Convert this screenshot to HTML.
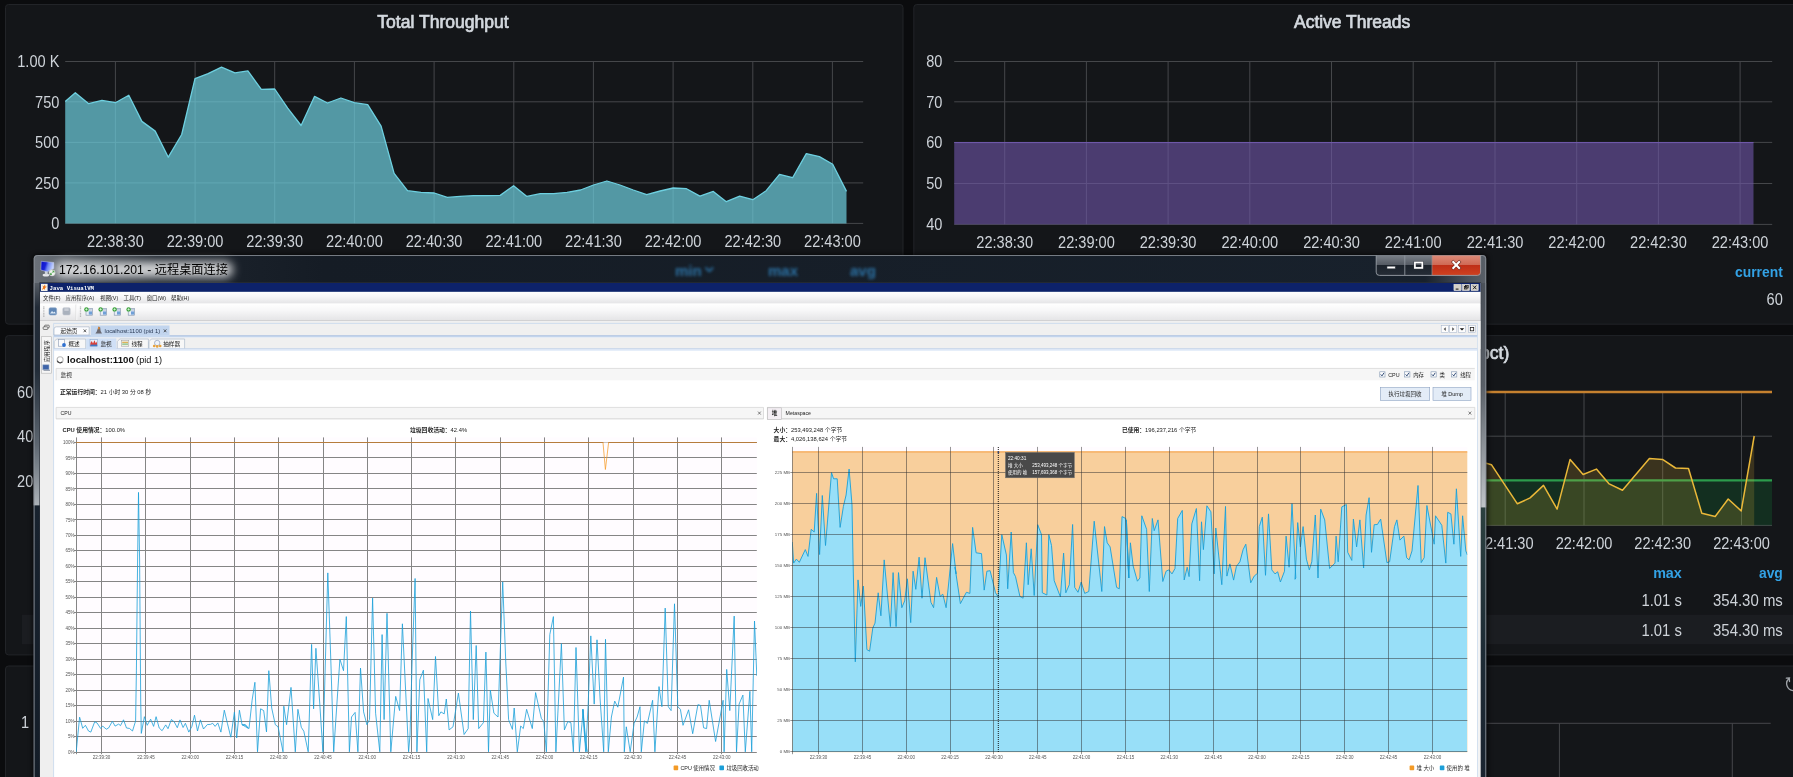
<!DOCTYPE html>
<html lang="zh-CN"><head><meta charset="utf-8"><title>Dashboard</title>
<style>html,body{margin:0;padding:0}body{width:1793px;height:777px;overflow:hidden;background:#0b0c0e;position:relative;font-family:"Liberation Sans", "Noto Sans CJK SC", sans-serif}

#win{position:absolute;left:0;top:0}

</style></head><body>
<svg id="dash" width="1793" height="777" viewBox="0 0 1793 777" style="position:absolute;left:0;top:0;will-change:transform" font-family='&quot;Liberation Sans&quot;, &quot;Noto Sans CJK SC&quot;, sans-serif'>
<rect x="5.5" y="4.5" width="897.5" height="319.7" rx="3" fill="#141619" stroke="#222428" stroke-width="1"/>
<rect x="913.8" y="4.5" width="897.5" height="319.7" rx="3" fill="#141619" stroke="#222428" stroke-width="1"/>
<rect x="5.5" y="335.6" width="897.5" height="319.3" rx="3" fill="#141619" stroke="#222428" stroke-width="1"/>
<rect x="913.8" y="335.6" width="897.5" height="319.3" rx="3" fill="#141619" stroke="#222428" stroke-width="1"/>
<rect x="5.5" y="666.0" width="897.5" height="199.0" rx="3" fill="#141619" stroke="#222428" stroke-width="1"/>
<rect x="913.8" y="666.0" width="897.5" height="199.0" rx="3" fill="#141619" stroke="#222428" stroke-width="1"/>
<text x="377.3" y="28.4" font-size="17.5" fill="#d3d8de" stroke="#d3d8de" stroke-width="0.7" textLength="131.4" lengthAdjust="spacingAndGlyphs">Total Throughput</text>
<line x1="65.2" y1="61.5" x2="863.2" y2="61.5" stroke="#45474a" stroke-width="1"/>
<line x1="65.2" y1="101.8" x2="863.2" y2="101.8" stroke="#45474a" stroke-width="1"/>
<line x1="65.2" y1="142.4" x2="863.2" y2="142.4" stroke="#45474a" stroke-width="1"/>
<line x1="65.2" y1="182.9" x2="863.2" y2="182.9" stroke="#45474a" stroke-width="1"/>
<line x1="65.2" y1="223.4" x2="863.2" y2="223.4" stroke="#45474a" stroke-width="1"/>
<line x1="115.4" y1="61" x2="115.4" y2="223.8" stroke="#45474a" stroke-width="1"/>
<line x1="195.1" y1="61" x2="195.1" y2="223.8" stroke="#45474a" stroke-width="1"/>
<line x1="274.7" y1="61" x2="274.7" y2="223.8" stroke="#45474a" stroke-width="1"/>
<line x1="354.4" y1="61" x2="354.4" y2="223.8" stroke="#45474a" stroke-width="1"/>
<line x1="434.1" y1="61" x2="434.1" y2="223.8" stroke="#45474a" stroke-width="1"/>
<line x1="513.8" y1="61" x2="513.8" y2="223.8" stroke="#45474a" stroke-width="1"/>
<line x1="593.4" y1="61" x2="593.4" y2="223.8" stroke="#45474a" stroke-width="1"/>
<line x1="673.1" y1="61" x2="673.1" y2="223.8" stroke="#45474a" stroke-width="1"/>
<line x1="752.8" y1="61" x2="752.8" y2="223.8" stroke="#45474a" stroke-width="1"/>
<line x1="832.4" y1="61" x2="832.4" y2="223.8" stroke="#45474a" stroke-width="1"/>
<polygon points="65.2,223.4 65.2,101.4 75.3,92.7 88.7,103.7 102.0,100.4 115.4,102.7 128.8,95.3 141.9,121.4 155.2,131.1 168.3,157.2 181.7,134.5 195.0,78.6 208.1,73.6 221.5,67.2 234.9,72.9 247.9,70.9 261.3,89.3 274.7,89.0 287.7,108.1 301.1,125.5 314.5,96.4 327.5,103.0 340.9,98.0 354.3,102.7 367.7,104.7 381.1,126.1 394.1,173.3 407.5,190.7 420.9,192.4 434.3,193.0 447.3,197.4 460.0,196.4 473.4,195.7 486.8,195.7 500.2,195.4 513.6,185.7 526.9,196.4 540.3,193.7 553.7,193.7 567.1,192.4 580.5,190.0 593.5,185.0 606.9,181.0 620.0,185.0 633.3,190.0 646.7,194.7 660.1,191.0 673.2,188.0 686.5,188.7 699.9,196.1 713.3,191.4 726.3,201.7 739.7,196.1 752.8,199.7 766.2,190.7 779.5,174.3 792.6,177.7 806.3,153.6 819.4,156.6 832.7,164.3 846.5,191.4 846.5,223.4" fill="#6ed0e0" fill-opacity="0.7"/>
<polyline points="65.2,101.4 75.3,92.7 88.7,103.7 102.0,100.4 115.4,102.7 128.8,95.3 141.9,121.4 155.2,131.1 168.3,157.2 181.7,134.5 195.0,78.6 208.1,73.6 221.5,67.2 234.9,72.9 247.9,70.9 261.3,89.3 274.7,89.0 287.7,108.1 301.1,125.5 314.5,96.4 327.5,103.0 340.9,98.0 354.3,102.7 367.7,104.7 381.1,126.1 394.1,173.3 407.5,190.7 420.9,192.4 434.3,193.0 447.3,197.4 460.0,196.4 473.4,195.7 486.8,195.7 500.2,195.4 513.6,185.7 526.9,196.4 540.3,193.7 553.7,193.7 567.1,192.4 580.5,190.0 593.5,185.0 606.9,181.0 620.0,185.0 633.3,190.0 646.7,194.7 660.1,191.0 673.2,188.0 686.5,188.7 699.9,196.1 713.3,191.4 726.3,201.7 739.7,196.1 752.8,199.7 766.2,190.7 779.5,174.3 792.6,177.7 806.3,153.6 819.4,156.6 832.7,164.3 846.5,191.4" fill="none" stroke="#6ed0e0" stroke-width="1.3" stroke-linejoin="round"/>
<text transform="translate(59.4 67.4) scale(0.935 1)" text-anchor="end" font-size="15.6" fill="#ced3d9">1.00 K</text>
<text transform="translate(59.4 107.7) scale(0.935 1)" text-anchor="end" font-size="15.6" fill="#ced3d9">750</text>
<text transform="translate(59.4 148.3) scale(0.935 1)" text-anchor="end" font-size="15.6" fill="#ced3d9">500</text>
<text transform="translate(59.4 188.8) scale(0.935 1)" text-anchor="end" font-size="15.6" fill="#ced3d9">250</text>
<text transform="translate(59.4 229.3) scale(0.935 1)" text-anchor="end" font-size="15.6" fill="#ced3d9">0</text>
<text transform="translate(115.4 247.1) scale(0.935 1)" text-anchor="middle" font-size="15.6" fill="#ced3d9">22:38:30</text>
<text transform="translate(195.1 247.1) scale(0.935 1)" text-anchor="middle" font-size="15.6" fill="#ced3d9">22:39:00</text>
<text transform="translate(274.7 247.1) scale(0.935 1)" text-anchor="middle" font-size="15.6" fill="#ced3d9">22:39:30</text>
<text transform="translate(354.4 247.1) scale(0.935 1)" text-anchor="middle" font-size="15.6" fill="#ced3d9">22:40:00</text>
<text transform="translate(434.1 247.1) scale(0.935 1)" text-anchor="middle" font-size="15.6" fill="#ced3d9">22:40:30</text>
<text transform="translate(513.8 247.1) scale(0.935 1)" text-anchor="middle" font-size="15.6" fill="#ced3d9">22:41:00</text>
<text transform="translate(593.4 247.1) scale(0.935 1)" text-anchor="middle" font-size="15.6" fill="#ced3d9">22:41:30</text>
<text transform="translate(673.1 247.1) scale(0.935 1)" text-anchor="middle" font-size="15.6" fill="#ced3d9">22:42:00</text>
<text transform="translate(752.8 247.1) scale(0.935 1)" text-anchor="middle" font-size="15.6" fill="#ced3d9">22:42:30</text>
<text transform="translate(832.4 247.1) scale(0.935 1)" text-anchor="middle" font-size="15.6" fill="#ced3d9">22:43:00</text>
<text transform="translate(675.0 275.5) scale(0.935 1)" text-anchor="start" font-size="15.0" fill="#33a2e5" font-weight="bold">min</text>
<text transform="translate(768.0 275.5) scale(0.935 1)" text-anchor="start" font-size="15.0" fill="#33a2e5" font-weight="bold">max</text>
<text transform="translate(850.0 275.5) scale(0.935 1)" text-anchor="start" font-size="15.0" fill="#33a2e5" font-weight="bold">avg</text>
<text x="1294" y="28.4" font-size="17.5" fill="#d3d8de" stroke="#d3d8de" stroke-width="0.7" textLength="116.2" lengthAdjust="spacingAndGlyphs">Active Threads</text>
<line x1="954.2" y1="61.5" x2="1772.2" y2="61.5" stroke="#45474a" stroke-width="1"/>
<line x1="954.2" y1="101.8" x2="1772.2" y2="101.8" stroke="#45474a" stroke-width="1"/>
<line x1="954.2" y1="142.4" x2="1772.2" y2="142.4" stroke="#45474a" stroke-width="1"/>
<line x1="954.2" y1="183.5" x2="1772.2" y2="183.5" stroke="#45474a" stroke-width="1"/>
<line x1="954.2" y1="224.4" x2="1772.2" y2="224.4" stroke="#45474a" stroke-width="1"/>
<line x1="1004.7" y1="61" x2="1004.7" y2="224.8" stroke="#45474a" stroke-width="1"/>
<line x1="1086.4" y1="61" x2="1086.4" y2="224.8" stroke="#45474a" stroke-width="1"/>
<line x1="1168.1" y1="61" x2="1168.1" y2="224.8" stroke="#45474a" stroke-width="1"/>
<line x1="1249.8" y1="61" x2="1249.8" y2="224.8" stroke="#45474a" stroke-width="1"/>
<line x1="1331.5" y1="61" x2="1331.5" y2="224.8" stroke="#45474a" stroke-width="1"/>
<line x1="1413.2" y1="61" x2="1413.2" y2="224.8" stroke="#45474a" stroke-width="1"/>
<line x1="1495.0" y1="61" x2="1495.0" y2="224.8" stroke="#45474a" stroke-width="1"/>
<line x1="1576.7" y1="61" x2="1576.7" y2="224.8" stroke="#45474a" stroke-width="1"/>
<line x1="1658.4" y1="61" x2="1658.4" y2="224.8" stroke="#45474a" stroke-width="1"/>
<line x1="1740.1" y1="61" x2="1740.1" y2="224.8" stroke="#45474a" stroke-width="1"/>
<rect x="954.2" y="142.4" width="799.3" height="82" fill="#7057aa" fill-opacity="0.6"/>
<line x1="954.2" y1="142.6" x2="1753.5" y2="142.6" stroke="#7a5fc0" stroke-width="1" stroke-opacity="0.8"/>
<text transform="translate(942.4 67.4) scale(0.935 1)" text-anchor="end" font-size="15.6" fill="#ced3d9">80</text>
<text transform="translate(942.4 107.7) scale(0.935 1)" text-anchor="end" font-size="15.6" fill="#ced3d9">70</text>
<text transform="translate(942.4 148.3) scale(0.935 1)" text-anchor="end" font-size="15.6" fill="#ced3d9">60</text>
<text transform="translate(942.4 189.4) scale(0.935 1)" text-anchor="end" font-size="15.6" fill="#ced3d9">50</text>
<text transform="translate(942.4 230.3) scale(0.935 1)" text-anchor="end" font-size="15.6" fill="#ced3d9">40</text>
<text transform="translate(1004.7 247.7) scale(0.935 1)" text-anchor="middle" font-size="15.6" fill="#ced3d9">22:38:30</text>
<text transform="translate(1086.4 247.7) scale(0.935 1)" text-anchor="middle" font-size="15.6" fill="#ced3d9">22:39:00</text>
<text transform="translate(1168.1 247.7) scale(0.935 1)" text-anchor="middle" font-size="15.6" fill="#ced3d9">22:39:30</text>
<text transform="translate(1249.8 247.7) scale(0.935 1)" text-anchor="middle" font-size="15.6" fill="#ced3d9">22:40:00</text>
<text transform="translate(1331.5 247.7) scale(0.935 1)" text-anchor="middle" font-size="15.6" fill="#ced3d9">22:40:30</text>
<text transform="translate(1413.2 247.7) scale(0.935 1)" text-anchor="middle" font-size="15.6" fill="#ced3d9">22:41:00</text>
<text transform="translate(1495.0 247.7) scale(0.935 1)" text-anchor="middle" font-size="15.6" fill="#ced3d9">22:41:30</text>
<text transform="translate(1576.7 247.7) scale(0.935 1)" text-anchor="middle" font-size="15.6" fill="#ced3d9">22:42:00</text>
<text transform="translate(1658.4 247.7) scale(0.935 1)" text-anchor="middle" font-size="15.6" fill="#ced3d9">22:42:30</text>
<text transform="translate(1740.1 247.7) scale(0.935 1)" text-anchor="middle" font-size="15.6" fill="#ced3d9">22:43:00</text>
<text transform="translate(1782.8 277.2) scale(0.900 1)" text-anchor="end" font-size="15.4" fill="#33a2e5" font-weight="bold">current</text>
<text transform="translate(1782.8 304.9) scale(0.935 1)" text-anchor="end" font-size="15.6" fill="#ced3d9">60</text>
<text transform="translate(33.3 398.2) scale(0.935 1)" text-anchor="end" font-size="15.6" fill="#ced3d9">60</text>
<text transform="translate(33.3 442.2) scale(0.935 1)" text-anchor="end" font-size="15.6" fill="#ced3d9">40</text>
<text transform="translate(33.3 486.6) scale(0.935 1)" text-anchor="end" font-size="15.6" fill="#ced3d9">20</text>
<rect x="21.9" y="614.8" width="870" height="29.4" fill="#1b1d21"/>
<text x="1509.3" y="359" text-anchor="end" font-size="17.5" fill="#d3d8de" stroke="#d3d8de" stroke-width="0.7">Response Times Percentiles (over 90 pct)</text>
<line x1="954.2" y1="436.2" x2="1772.0" y2="436.2" stroke="#45474a" stroke-width="1"/>
<line x1="954.2" y1="480.4" x2="1772.0" y2="480.4" stroke="#45474a" stroke-width="1"/>
<line x1="954.2" y1="525.4" x2="1772.0" y2="525.4" stroke="#45474a" stroke-width="1"/>
<line x1="1032.6" y1="392" x2="1032.6" y2="525.8" stroke="#45474a" stroke-width="1"/>
<line x1="1111.4" y1="392" x2="1111.4" y2="525.8" stroke="#45474a" stroke-width="1"/>
<line x1="1190.1" y1="392" x2="1190.1" y2="525.8" stroke="#45474a" stroke-width="1"/>
<line x1="1268.9" y1="392" x2="1268.9" y2="525.8" stroke="#45474a" stroke-width="1"/>
<line x1="1347.7" y1="392" x2="1347.7" y2="525.8" stroke="#45474a" stroke-width="1"/>
<line x1="1426.4" y1="392" x2="1426.4" y2="525.8" stroke="#45474a" stroke-width="1"/>
<line x1="1505.2" y1="392" x2="1505.2" y2="525.8" stroke="#45474a" stroke-width="1"/>
<line x1="1584.0" y1="392" x2="1584.0" y2="525.8" stroke="#45474a" stroke-width="1"/>
<line x1="1662.7" y1="392" x2="1662.7" y2="525.8" stroke="#45474a" stroke-width="1"/>
<line x1="1741.5" y1="392" x2="1741.5" y2="525.8" stroke="#45474a" stroke-width="1"/>
<rect x="954.2" y="480.4" width="817.8" height="45" fill="#10a345" fill-opacity="0.18"/>
<line x1="954.2" y1="480.4" x2="1772.0" y2="480.4" stroke="#2c9c4c" stroke-width="2.2"/>
<polygon points="1400.0,525.4 1400.0,470.0 1440.0,455.0 1470.0,470.0 1486.3,463.2 1491.4,464.7 1517.4,503.8 1530.1,497.9 1543.5,485.4 1557.1,509.1 1570.1,459.4 1583.1,474.5 1596.4,469.1 1609.2,483.9 1622.5,490.2 1649.4,458.5 1662.5,459.4 1675.5,468.0 1688.5,468.5 1701.8,513.2 1715.2,516.5 1728.2,499.0 1741.2,510.9 1754.2,436.0 1754.2,525.4" fill="#eab839" fill-opacity="0.18"/>
<polyline points="1400.0,470.0 1440.0,455.0 1470.0,470.0 1486.3,463.2 1491.4,464.7 1517.4,503.8 1530.1,497.9 1543.5,485.4 1557.1,509.1 1570.1,459.4 1583.1,474.5 1596.4,469.1 1609.2,483.9 1622.5,490.2 1649.4,458.5 1662.5,459.4 1675.5,468.0 1688.5,468.5 1701.8,513.2 1715.2,516.5 1728.2,499.0 1741.2,510.9 1754.2,436.0" fill="none" stroke="#eab839" stroke-width="1.5" stroke-linejoin="round"/>
<line x1="954.2" y1="392" x2="1772.0" y2="392" stroke="#c5812f" stroke-width="2.5"/>
<text transform="translate(1426.4 548.9) scale(0.935 1)" text-anchor="middle" font-size="15.6" fill="#ced3d9">22:41:00</text>
<text transform="translate(1505.2 548.9) scale(0.935 1)" text-anchor="middle" font-size="15.6" fill="#ced3d9">22:41:30</text>
<text transform="translate(1584.0 548.9) scale(0.935 1)" text-anchor="middle" font-size="15.6" fill="#ced3d9">22:42:00</text>
<text transform="translate(1662.7 548.9) scale(0.935 1)" text-anchor="middle" font-size="15.6" fill="#ced3d9">22:42:30</text>
<text transform="translate(1741.5 548.9) scale(0.935 1)" text-anchor="middle" font-size="15.6" fill="#ced3d9">22:43:00</text>
<text transform="translate(1681.8 578.2) scale(0.930 1)" text-anchor="end" font-size="15.4" fill="#33a2e5" font-weight="bold">max</text>
<text transform="translate(1782.8 578.2) scale(0.900 1)" text-anchor="end" font-size="15.4" fill="#33a2e5" font-weight="bold">avg</text>
<rect x="930" y="614.8" width="870" height="29.4" fill="#1b1d21"/>
<text transform="translate(1681.8 605.8) scale(0.950 1)" text-anchor="end" font-size="15.6" fill="#ced3d9">1.01 s</text>
<text transform="translate(1782.8 605.8) scale(0.958 1)" text-anchor="end" font-size="15.6" fill="#ced3d9">354.30 ms</text>
<text transform="translate(1681.8 635.8) scale(0.950 1)" text-anchor="end" font-size="15.6" fill="#ced3d9">1.01 s</text>
<text transform="translate(1782.8 635.8) scale(0.958 1)" text-anchor="end" font-size="15.6" fill="#ced3d9">354.30 ms</text>
<text transform="translate(29.0 727.6) scale(0.935 1)" text-anchor="end" font-size="15.6" fill="#ced3d9">1</text>
<line x1="954" y1="723.3" x2="1770.7" y2="723.3" stroke="#45474a" stroke-width="1"/>
<line x1="1559.4" y1="723.3" x2="1559.4" y2="777" stroke="#45474a" stroke-width="1"/>
<line x1="1732.3" y1="723.3" x2="1732.3" y2="777" stroke="#45474a" stroke-width="1"/>
<path d="M1793.5 690.6 a7 7 0 0 1 -4.5 -12.2 M1786.3 678.2 l3.4 -0.4 M1789.3 678.2 l0.2 3.3" fill="none" stroke="#9fa3a8" stroke-width="1.3" stroke-linecap="round"/>
</svg>
<svg id="win" width="1793" height="777" viewBox="0 0 1793 777" style="position:absolute;left:0;top:0;will-change:transform" font-family='&quot;Liberation Sans&quot;, &quot;Noto Sans CJK SC&quot;, sans-serif'>
<defs>
<filter id="soft" filterUnits="userSpaceOnUse" x="40" y="283" width="1441" height="500"><feGaussianBlur stdDeviation="0.38"/></filter>
<filter id="b1" x="-20%" y="-50%" width="140%" height="200%"><feGaussianBlur stdDeviation="1.6"/></filter>
<filter id="glow" x="-10%" y="-60%" width="120%" height="220%"><feGaussianBlur stdDeviation="4.6"/></filter>
<filter id="shadow" x="-2%" y="-2%" width="104%" height="104%"><feGaussianBlur stdDeviation="2"/></filter>
<linearGradient id="gLeft" x1="0" y1="255" x2="0" y2="777" gradientUnits="userSpaceOnUse">
 <stop offset="0.05" stop-color="#5a6068"/><stop offset="0.1" stop-color="#222b37"/><stop offset="0.22" stop-color="#222c38"/><stop offset="0.36" stop-color="#5c656f"/>
 <stop offset="0.478" stop-color="#aab0b6"/><stop offset="0.481" stop-color="#18222e"/><stop offset="1" stop-color="#141d28"/>
</linearGradient>
<linearGradient id="gRight" x1="0" y1="255" x2="0" y2="777" gradientUnits="userSpaceOnUse">
 <stop offset="0" stop-color="#5a6068"/><stop offset="0.06" stop-color="#4b5159"/><stop offset="0.25" stop-color="#5a6068"/>
 <stop offset="0.482" stop-color="#bfc4c7"/><stop offset="0.485" stop-color="#2c4140"/><stop offset="0.75" stop-color="#1e2c36"/><stop offset="1" stop-color="#1a2430"/>
</linearGradient>
<linearGradient id="gTitle" x1="0" y1="0" x2="1" y2="0">
 <stop offset="0" stop-color="#6c727a"/><stop offset="0.012" stop-color="#636971"/><stop offset="0.04" stop-color="#3d444c"/><stop offset="0.085" stop-color="#1d242d"/><stop offset="0.2" stop-color="#151c25"/><stop offset="0.958" stop-color="#18212c"/><stop offset="0.988" stop-color="#4b525b"/><stop offset="1" stop-color="#5a6068"/>
</linearGradient>
<linearGradient id="gBtn" x1="0" y1="0" x2="0" y2="1">
 <stop offset="0" stop-color="#7a8088"/><stop offset="0.46" stop-color="#555b64"/><stop offset="0.5" stop-color="#1c232c"/><stop offset="1" stop-color="#252c36"/>
</linearGradient>
<linearGradient id="gClose" x1="0" y1="0" x2="0" y2="1">
 <stop offset="0" stop-color="#dd8a78"/><stop offset="0.46" stop-color="#cf6a55"/><stop offset="0.5" stop-color="#bf2f18"/><stop offset="1" stop-color="#cf4120"/>
</linearGradient>
<linearGradient id="gMenu" x1="0" y1="0" x2="0" y2="1">
 <stop offset="0" stop-color="#ffffff"/><stop offset="0.4" stop-color="#f7f7f8"/><stop offset="1" stop-color="#e4e4e6"/>
</linearGradient>
<linearGradient id="gMon" x1="0" y1="0" x2="1" y2="0.25">
 <stop offset="0" stop-color="#0a0fc4"/><stop offset="0.42" stop-color="#1a22d8"/><stop offset="0.62" stop-color="#6f86f2"/><stop offset="1" stop-color="#c4d2ff"/>
</linearGradient>
<clipPath id="cpuclip"><rect x="76" y="441" width="681" height="311.6"/></clipPath>
<clipPath id="heapclip"><rect x="792.3" y="445" width="675" height="307"/></clipPath>
</defs>
<rect x="32" y="254" width="1456.5" height="540" rx="5" fill="#000" opacity="0.55" filter="url(#shadow)"/>
<path d="M33.7 800 V258.6 a3.6 3.6 0 0 1 3.6 -3.6 H1482.6 a3.6 3.6 0 0 1 3.6 3.6 V800 Z" fill="url(#gTitle)"/>
<rect x="33.7" y="283" width="6.4" height="520" fill="url(#gLeft)"/>
<rect x="1480.3" y="283" width="5.9" height="520" fill="url(#gRight)"/>
<path d="M34.2 800 V258.7 a3.2 3.2 0 0 1 3.2 -3.2 H1482.5 a3.2 3.2 0 0 1 3.2 3.2 V800" fill="none" stroke="#8d939b" stroke-opacity="0.8" stroke-width="1"/>
<path d="M39.7 800 V282.6 H1480.7 V800" fill="none" stroke="#2a3038" stroke-opacity="0.9" stroke-width="0.8"/>
<g font-size="15" font-weight="bold" fill="#2f7fb8" filter="url(#b1)" opacity="0.85">
<text x="675" y="275.5">min</text><path d="M705.5 267.5 l3.8 3.8 l3.8 -3.8" fill="none" stroke="#2f7fb8" stroke-width="1.8"/>
<text x="768" y="275.5">max</text><text x="850" y="275.5">avg</text></g>
<rect x="55" y="261.5" width="178" height="16" rx="8" fill="#fff" opacity="0.8" filter="url(#glow)"/>
<text x="59" y="273.6" font-size="12.4" fill="#000" textLength="169" lengthAdjust="spacingAndGlyphs">172.16.101.201 - 远程桌面连接</text>
<g>
<ellipse cx="45.9" cy="275" rx="3.3" ry="1.6" fill="#e6e7eb"/>
<path d="M44.6 270.6 l3.2 0.8 l-0.3 3.2 l-2.4 -0.2 Z" fill="#cfd3da"/>
<path d="M41.2 261.3 L53.8 262.5 L53.8 268.6 L47.5 271.7 L40.8 270 Z" fill="url(#gMon)" stroke="#c9d3ee" stroke-width="0.5"/>
<circle cx="52.1" cy="272.8" r="3.1" fill="#f1f3f0" stroke="#c9ccc8" stroke-width="0.5"/>
<path d="M50.4 274.4 l1.4 -1.4 M53.8 271.2 l-1.4 1.4 M50.3 272.9 v1.6 h1.6 M53.9 272.7 v-1.6 h-1.6" stroke="#3a9a3a" stroke-width="0.8" fill="none"/>
</g>
<path d="M1376.2 255.5 H1432 V275.4 H1379.4 a3.2 3.2 0 0 1 -3.2 -3.2 Z" fill="url(#gBtn)"/>
<path d="M1432 255.5 H1480.6 V272.2 a3.2 3.2 0 0 1 -3.2 3.2 H1432 Z" fill="url(#gClose)"/>
<path d="M1376.2 255.5 V272.2 a3.2 3.2 0 0 0 3.2 3.2 H1477.4 a3.2 3.2 0 0 0 3.2 -3.2 V255.5" fill="none" stroke="#9aa0a8" stroke-width="0.9"/>
<line x1="1404.8" y1="255.5" x2="1404.8" y2="275" stroke="#8f959d" stroke-width="0.9"/>
<line x1="1432" y1="255.5" x2="1432" y2="275" stroke="#9a8f8f" stroke-width="0.7"/>
<rect x="1387" y="266.2" width="8.2" height="2.6" fill="#fff" stroke="#3a3f47" stroke-width="0.5"/>
<rect x="1414.9" y="262.5" width="7.4" height="5.4" fill="none" stroke="#3a3f47" stroke-width="2.6"/>
<rect x="1414.9" y="262.5" width="7.4" height="5.4" fill="none" stroke="#fff" stroke-width="1.7"/>
<path d="M1453.3 262.1 L1459.1 267.9 M1459.1 262.1 L1453.3 267.9" stroke="#6d2418" stroke-width="3.2" stroke-linecap="square"/>
<path d="M1453.3 262.1 L1459.1 267.9 M1459.1 262.1 L1453.3 267.9" stroke="#fff" stroke-width="2.1" stroke-linecap="square"/>
<g filter="url(#soft)">
<rect x="40.1" y="283" width="1440.3" height="500" fill="#ffffff"/>
<rect x="40.1" y="283" width="1440.3" height="8.9" fill="#0a246a"/>
<rect x="41" y="283.8" width="6.6" height="7.2" fill="#f3f1ea"/>
<path d="M42 290 l1.2 -3 l-1 -1.4 l1.6 0.6 l1.2 -1.8 l0.4 2.2 l1.6 0.2 l-1.7 1 l-0.9 2.2 l-0.6 -1.3 Z" fill="#f0761c"/>
<text x="49.6" y="290" font-family="&quot;Liberation Mono&quot;, monospace" font-size="5.7" font-weight="bold" fill="#fff">Java VisualVM</text>
<rect x="1453.9" y="284.2" width="7.3" height="6.5" fill="#d4d0c8" stroke="#f5f4f0" stroke-width="0.4"/>
<rect x="1462.3" y="284.2" width="7.3" height="6.5" fill="#d4d0c8" stroke="#f5f4f0" stroke-width="0.4"/>
<rect x="1471.0" y="284.2" width="7.3" height="6.5" fill="#d4d0c8" stroke="#f5f4f0" stroke-width="0.4"/>
<rect x="1455.7" y="288.6" width="2.8" height="1" fill="#111"/>
<rect x="1464.4" y="286.6" width="2.6" height="2.4" fill="none" stroke="#111" stroke-width="0.7"/><rect x="1465.6" y="285.5" width="2.6" height="2.4" fill="none" stroke="#111" stroke-width="0.7"/>
<path d="M1473 285.6 l3.4 3.6 M1476.4 285.6 l-3.4 3.6" stroke="#111" stroke-width="0.9"/>
<rect x="40.1" y="291.9" width="1440.3" height="11.7" fill="url(#gMenu)"/>
<text x="43.0" y="299.8" font-size="5.4" fill="#222">文件(F)</text>
<text x="65.5" y="299.8" font-size="5.4" fill="#222">应用程序(A)</text>
<text x="100.3" y="299.8" font-size="5.4" fill="#222">视图(V)</text>
<text x="123.5" y="299.8" font-size="5.4" fill="#222">工具(T)</text>
<text x="146.7" y="299.8" font-size="5.4" fill="#222">窗口(W)</text>
<text x="171.0" y="299.8" font-size="5.4" fill="#222">帮助(H)</text>
<rect x="40.1" y="303.6" width="1440.3" height="17" fill="url(#gMenu)"/>
<line x1="40.1" y1="320.6" x2="1480.4" y2="320.6" stroke="#c4c4c6" stroke-width="0.8"/>
<line x1="76" y1="304.5" x2="76" y2="320" stroke="#d5d5d7" stroke-width="0.8"/>
<line x1="76.8" y1="304.5" x2="76.8" y2="320" stroke="#ffffff" stroke-width="0.8"/>
<line x1="43.8" y1="306.6" x2="43.8" y2="317" stroke="#a9a9ab" stroke-width="1.3" stroke-dasharray="0.8 0.8"/>
<line x1="80.5" y1="306.6" x2="80.5" y2="317" stroke="#a9a9ab" stroke-width="1.3" stroke-dasharray="0.8 0.8"/>
<rect x="49" y="307.8" width="7.6" height="7.2" rx="1.4" fill="#5f86b5" stroke="#8aa5c8" stroke-width="0.6"/><path d="M50 313.5 l2 -2.6 l1.6 1.6 l1 -1 l1.2 2" fill="#dbe8f6"/>
<rect x="62.8" y="307.8" width="7.4" height="7.2" rx="1.2" fill="#a9b1bd" stroke="#c3c8d0" stroke-width="0.6"/><rect x="64.3" y="308.3" width="4.4" height="2.6" fill="#c9ced6"/>
<rect x="86.0" y="308.6" width="6.4" height="6.6" fill="#e8eef6" stroke="#7d8fa8" stroke-width="0.6"/>
<rect x="88.8" y="311.4" width="3.2" height="3.2" fill="#6fa0d8"/>
<rect x="86.6" y="309.2" width="5.2" height="1.4" fill="#b9c6d8"/>
<circle cx="86.4" cy="309.4" r="2.2" fill="#3aa23a"/>
<path d="M85.2 309.4 h2.4 M86.4 308.2 v2.4" stroke="#eaffea" stroke-width="0.7"/>
<rect x="100.2" y="308.6" width="6.4" height="6.6" fill="#e8eef6" stroke="#7d8fa8" stroke-width="0.6"/>
<rect x="103.0" y="311.4" width="3.2" height="3.2" fill="#6fa0d8"/>
<rect x="100.8" y="309.2" width="5.2" height="1.4" fill="#b9c6d8"/>
<circle cx="100.6" cy="309.4" r="2.2" fill="#3aa23a"/>
<path d="M99.4 309.4 h2.4 M100.6 308.2 v2.4" stroke="#eaffea" stroke-width="0.7"/>
<rect x="114.2" y="308.6" width="6.4" height="6.6" fill="#e8eef6" stroke="#7d8fa8" stroke-width="0.6"/>
<rect x="117.0" y="311.4" width="3.2" height="3.2" fill="#6fa0d8"/>
<rect x="114.8" y="309.2" width="5.2" height="1.4" fill="#b9c6d8"/>
<circle cx="114.6" cy="309.4" r="2.2" fill="#3aa23a"/>
<path d="M113.4 309.4 h2.4 M114.6 308.2 v2.4" stroke="#eaffea" stroke-width="0.7"/>
<rect x="128.2" y="308.6" width="6.4" height="6.6" fill="#e8eef6" stroke="#7d8fa8" stroke-width="0.6"/>
<rect x="131.0" y="311.4" width="3.2" height="3.2" fill="#6fa0d8"/>
<rect x="128.8" y="309.2" width="5.2" height="1.4" fill="#b9c6d8"/>
<circle cx="128.6" cy="309.4" r="2.2" fill="#3aa23a"/>
<path d="M127.4 309.4 h2.4 M128.6 308.2 v2.4" stroke="#eaffea" stroke-width="0.7"/>
<rect x="40.1" y="321" width="1440.3" height="28" fill="#f0f0f0"/>
<rect x="40.1" y="321" width="13.2" height="480" fill="#efefef"/>
<rect x="53.6" y="323.2" width="1424.0" height="480" fill="#ffffff"/>
<rect x="54" y="323.6" width="1423.2" height="12" fill="#f0f0f0"/>
<path d="M53.6 800 V323.4 H1477.6 V800" fill="none" stroke="#c3d4ea" stroke-width="0.8"/>
<rect x="1478" y="321" width="2.4" height="480" fill="#f3f3f3"/>
<rect x="44.6" y="325.2" width="4.6" height="2.6" rx="0.6" fill="#f6f6f6" stroke="#444" stroke-width="0.7"/><rect x="43.2" y="326.8" width="4.6" height="2.6" rx="0.6" fill="#f6f6f6" stroke="#444" stroke-width="0.7"/>
<rect x="41.3" y="336.7" width="10.3" height="36.5" fill="#f6f6f6" stroke="#b4b4b4" stroke-width="0.6"/>
<text transform="translate(48.6,362.6) rotate(-90)" font-size="5.6" fill="#222">应用程序</text>
<rect x="42.8" y="364.8" width="6.2" height="5" fill="#3c64a8" stroke="#9fb0c8" stroke-width="0.6"/><rect x="43.6" y="369.8" width="6.4" height="1" fill="#8a95a5"/>
<path d="M54 335 V329 a2.4 2.4 0 0 1 2.4 -2.2 H89.2 V335 Z" fill="#fbfcfe" stroke="#9eacbf" stroke-width="0.6"/>
<text x="60.6" y="333.3" font-size="5.6" fill="#222">起始页</text>
<path d="M83.6 329.4 l2.6 2.8 M86.2 329.4 l-2.6 2.8" stroke="#222" stroke-width="0.7"/>
<rect x="90.7" y="325.5" width="78.8" height="10.4" fill="#c2d5ee"/>
<path d="M95.4 333.4 h6.6 l-1.4 -2.4 l-0.4 -3.4 l-1.4 -1.2 l-1 2.2 l-1 3 Z" fill="#6a6a72"/><path d="M98.6 326.4 l1.2 1 l-0.6 2.2 l-1.2 -0.6 Z" fill="#f08a24"/>
<text x="104.6" y="332.9" font-size="5.5" fill="#2a3a55" textLength="55.5" lengthAdjust="spacingAndGlyphs">localhost:1100 (pid 1)</text>
<path d="M163.8 329.4 l2.6 2.8 M166.4 329.4 l-2.6 2.8" stroke="#222" stroke-width="0.7"/>
<rect x="54" y="335.4" width="1423.2" height="2.2" fill="#c7d9f0"/>
<line x1="54" y1="335.7" x2="90.7" y2="335.7" stroke="#9fb6d8" stroke-width="0.6"/><line x1="169.5" y1="335.7" x2="1477.2" y2="335.7" stroke="#9fb6d8" stroke-width="0.6"/>
<rect x="1441.2" y="325.6" width="7.2" height="7" fill="#fdfdfd" stroke="#9fb0c8" stroke-width="0.5"/>
<path d="M1445.8 327.3 v3.6 l-2.2 -1.8 Z" fill="#555"/>
<rect x="1449.6" y="325.6" width="7.2" height="7" fill="#fdfdfd" stroke="#9fb0c8" stroke-width="0.5"/>
<path d="M1452.2 327.3 v3.6 l2.2 -1.8 Z" fill="#555"/>
<rect x="1458.4" y="325.6" width="7.2" height="7" fill="#fdfdfd" stroke="#9fb0c8" stroke-width="0.5"/>
<path d="M1459.8 328.2 h4.4 l-2.2 2.4 Z" fill="#111"/>
<rect x="1468.4" y="325.6" width="7.2" height="7" fill="#fdfdfd" stroke="#9fb0c8" stroke-width="0.5"/>
<rect x="1470.3" y="327.4" width="3.4" height="3.4" fill="none" stroke="#222" stroke-width="0.8"/>
<rect x="54" y="337.6" width="1423.2" height="11" fill="#f0f0f0"/>
<path d="M54.2 348.4 V341.6 l2.4 -2.6 H85.7 V348.4" fill="#f7f7f7" stroke="#a3b1c6" stroke-width="0.6"/>
<text x="68.4" y="346.2" font-size="5.6" fill="#222">概述</text>
<rect x="86.2" y="338.4" width="30.1" height="11.2" fill="#d0e0f6"/>
<text x="100.4" y="346.2" font-size="5.6" fill="#222">监视</text>
<path d="M117.3 348.4 V341.6 l2.4 -2.6 H148.4 V348.4" fill="#f7f7f7" stroke="#a3b1c6" stroke-width="0.6"/>
<text x="131.5" y="346.2" font-size="5.6" fill="#222">线程</text>
<path d="M149.0 348.4 V341.6 l2.4 -2.6 H184.6 V348.4" fill="#f7f7f7" stroke="#a3b1c6" stroke-width="0.6"/>
<text x="163.2" y="346.2" font-size="5.6" fill="#222">抽样器</text>
<rect x="58.6" y="339.6" width="6" height="6.6" fill="#fafbfd" stroke="#8b9bb4" stroke-width="0.6"/><circle cx="64" cy="345" r="1.9" fill="#2d6fd0"/>
<rect x="90" y="339.6" width="7.6" height="6.8" fill="#e9f0fa" stroke="#7f9cc8" stroke-width="0.5"/><path d="M90.4 346 v-3 l1.4 -2 l1.2 2.6 l1.4 -3.4 l1.4 3 l1.2 -1.8 v4.6 Z" fill="#d8403a"/><rect x="90.4" y="344.6" width="6.8" height="1.6" fill="#3f78c8"/>
<rect x="121.4" y="340.6" width="7.4" height="5.6" fill="#f1f1e6" stroke="#9a9a9a" stroke-width="0.5"/><rect x="122.2" y="341.8" width="5.8" height="1" fill="#d8a23a"/><rect x="122.2" y="343.6" width="5.8" height="1" fill="#68b068"/>
<circle cx="157.2" cy="343" r="2.7" fill="#eef3fb" stroke="#7d8fb0" stroke-width="0.6"/><circle cx="154.2" cy="346" r="1.3" fill="#e8a13a"/><circle cx="157.2" cy="346.4" r="1.3" fill="#e8a13a"/><circle cx="160.2" cy="346" r="1.3" fill="#e8a13a"/>
<line x1="54" y1="348.8" x2="86.2" y2="348.8" stroke="#a5bde0" stroke-width="0.7"/><line x1="116.3" y1="348.8" x2="1477.2" y2="348.8" stroke="#a5bde0" stroke-width="0.7"/>
<rect x="54" y="349.3" width="1423.2" height="1.3" fill="#d6e3f5"/>
<circle cx="60.1" cy="359.7" r="3" fill="none" stroke="#b9b9b9" stroke-width="1.1"/><path d="M57.3 360.8 a3 3 0 0 0 5 1.1" fill="none" stroke="#444" stroke-width="1.1"/>
<text x="67.1" y="363.3" font-size="9.4" fill="#111"><tspan font-weight="bold" textLength="66.8" lengthAdjust="spacingAndGlyphs">localhost:1100</tspan><tspan dx="2.2" font-size="9.2">(pid 1)</tspan></text>
<rect x="56.1" y="368.4" width="1418.7" height="11.9" fill="#f6f6f6"/>
<path d="M56.1 380.3 V368.4 H1474.8" fill="none" stroke="#d2d2d2" stroke-width="0.7"/>
<text x="60.6" y="376.7" font-size="5.6" fill="#222">监视</text>
<rect x="1379.8" y="371.8" width="5.2" height="5.2" fill="#fdfdfd" stroke="#7e93b0" stroke-width="0.6"/>
<path d="M1380.7 374.4 l1.3 1.5 l2 -3.1" fill="none" stroke="#1d3a6a" stroke-width="0.9"/>
<text x="1388.2" y="376.5" font-size="5.4" fill="#222">CPU</text>
<rect x="1404.7" y="371.8" width="5.2" height="5.2" fill="#fdfdfd" stroke="#7e93b0" stroke-width="0.6"/>
<path d="M1405.6 374.4 l1.3 1.5 l2 -3.1" fill="none" stroke="#1d3a6a" stroke-width="0.9"/>
<text x="1413.2" y="376.5" font-size="5.4" fill="#222">内存</text>
<rect x="1431.0" y="371.8" width="5.2" height="5.2" fill="#fdfdfd" stroke="#7e93b0" stroke-width="0.6"/>
<path d="M1431.9 374.4 l1.3 1.5 l2 -3.1" fill="none" stroke="#1d3a6a" stroke-width="0.9"/>
<text x="1439.6" y="376.5" font-size="5.4" fill="#222">类</text>
<rect x="1451.6" y="371.8" width="5.2" height="5.2" fill="#fdfdfd" stroke="#7e93b0" stroke-width="0.6"/>
<path d="M1452.5 374.4 l1.3 1.5 l2 -3.1" fill="none" stroke="#1d3a6a" stroke-width="0.9"/>
<text x="1460.2" y="376.5" font-size="5.4" fill="#222">线程</text>
<text x="60" y="394" font-size="5.8" fill="#222"><tspan font-weight="bold">正常运行时间：</tspan>21 小时 30 分 08 秒</text>
<rect x="1380.3" y="387.6" width="49.4" height="12.8" fill="#e3ecf7" stroke="#8ca2c2" stroke-width="0.6"/>
<text x="1405.0" y="396.1" text-anchor="middle" font-size="5.5" fill="#222">执行垃圾回收</text>
<rect x="1433.0" y="387.6" width="38.0" height="12.8" fill="#e3ecf7" stroke="#8ca2c2" stroke-width="0.6"/>
<text x="1452.0" y="396.1" text-anchor="middle" font-size="5.5" fill="#222">堆 Dump</text>
<rect x="56.1" y="407.4" width="707.4" height="11.5" fill="#f6f6f6"/>
<path d="M56.1 418.9 V407.4 H763.5 V418.9" fill="none" stroke="#d2d2d2" stroke-width="0.7"/>
<line x1="56.1" y1="418.9" x2="763.5" y2="418.9" stroke="#bdbdbd" stroke-width="0.6"/>
<text x="60.6" y="415.2" font-size="5.2" fill="#222">CPU</text>
<path d="M758 411.6 l2.8 3 M760.8 411.6 l-2.8 3" stroke="#333" stroke-width="0.6"/>
<rect x="767.4" y="407.4" width="707.4" height="11.5" fill="#f6f6f6"/>
<path d="M767.4 418.9 V407.4 H1474.8 V418.9" fill="none" stroke="#d2d2d2" stroke-width="0.7"/>
<line x1="767.4" y1="418.9" x2="1474.8" y2="418.9" stroke="#a9a9a9" stroke-width="0.6"/>
<rect x="767.6" y="407.8" width="13.8" height="11.8" fill="#f4eff4" stroke="#b9b9b9" stroke-width="0.6"/>
<text x="771.8" y="415.4" font-size="5.6" font-weight="bold" fill="#222">堆</text>
<text x="785.6" y="415.2" font-size="5.2" fill="#222">Metaspace</text>
<path d="M1468.5 411.6 l2.8 3 M1471.3 411.6 l-2.8 3" stroke="#333" stroke-width="0.6"/>
<text x="62.5" y="431.8" font-size="5.8" fill="#222"><tspan font-weight="bold">CPU 使用情况：</tspan>100.0%</text>
<text x="410" y="431.8" font-size="5.8" fill="#222"><tspan font-weight="bold">垃圾回收活动：</tspan>42.4%</text>
<text x="773.6" y="431.8" font-size="5.8" fill="#222"><tspan font-weight="bold">大小：</tspan>253,493,248 个字节</text>
<text x="773.6" y="441" font-size="5.8" fill="#222"><tspan font-weight="bold">最大：</tspan>4,026,138,624 个字节</text>
<text x="1121.9" y="431.8" font-size="5.8" fill="#222"><tspan font-weight="bold">已使用：</tspan>196,237,216 个字节</text>
<rect x="76.2" y="437.4" width="680.6" height="314.8" fill="#fffcff"/>
<line x1="74.2" y1="442.5" x2="756.8" y2="442.5" stroke="#858585" stroke-width="1"/>
<text x="74.6" y="444.0" text-anchor="end" font-size="4.5" fill="#555">100%</text>
<line x1="74.2" y1="457.5" x2="756.8" y2="457.5" stroke="#858585" stroke-width="1"/>
<text x="74.6" y="459.5" text-anchor="end" font-size="4.5" fill="#555">95%</text>
<line x1="74.2" y1="473.5" x2="756.8" y2="473.5" stroke="#858585" stroke-width="1"/>
<text x="74.6" y="475.0" text-anchor="end" font-size="4.5" fill="#555">90%</text>
<line x1="74.2" y1="488.5" x2="756.8" y2="488.5" stroke="#858585" stroke-width="1"/>
<text x="74.6" y="490.5" text-anchor="end" font-size="4.5" fill="#555">85%</text>
<line x1="74.2" y1="504.5" x2="756.8" y2="504.5" stroke="#858585" stroke-width="1"/>
<text x="74.6" y="506.0" text-anchor="end" font-size="4.5" fill="#555">80%</text>
<line x1="74.2" y1="519.5" x2="756.8" y2="519.5" stroke="#858585" stroke-width="1"/>
<text x="74.6" y="521.5" text-anchor="end" font-size="4.5" fill="#555">75%</text>
<line x1="74.2" y1="535.5" x2="756.8" y2="535.5" stroke="#858585" stroke-width="1"/>
<text x="74.6" y="536.9" text-anchor="end" font-size="4.5" fill="#555">70%</text>
<line x1="74.2" y1="550.5" x2="756.8" y2="550.5" stroke="#858585" stroke-width="1"/>
<text x="74.6" y="552.4" text-anchor="end" font-size="4.5" fill="#555">65%</text>
<line x1="74.2" y1="566.5" x2="756.8" y2="566.5" stroke="#858585" stroke-width="1"/>
<text x="74.6" y="567.9" text-anchor="end" font-size="4.5" fill="#555">60%</text>
<line x1="74.2" y1="581.5" x2="756.8" y2="581.5" stroke="#858585" stroke-width="1"/>
<text x="74.6" y="583.4" text-anchor="end" font-size="4.5" fill="#555">55%</text>
<line x1="74.2" y1="597.5" x2="756.8" y2="597.5" stroke="#858585" stroke-width="1"/>
<text x="74.6" y="598.9" text-anchor="end" font-size="4.5" fill="#555">50%</text>
<line x1="74.2" y1="612.5" x2="756.8" y2="612.5" stroke="#858585" stroke-width="1"/>
<text x="74.6" y="614.4" text-anchor="end" font-size="4.5" fill="#555">45%</text>
<line x1="74.2" y1="628.5" x2="756.8" y2="628.5" stroke="#858585" stroke-width="1"/>
<text x="74.6" y="629.9" text-anchor="end" font-size="4.5" fill="#555">40%</text>
<line x1="74.2" y1="643.5" x2="756.8" y2="643.5" stroke="#858585" stroke-width="1"/>
<text x="74.6" y="645.4" text-anchor="end" font-size="4.5" fill="#555">35%</text>
<line x1="74.2" y1="659.5" x2="756.8" y2="659.5" stroke="#858585" stroke-width="1"/>
<text x="74.6" y="660.9" text-anchor="end" font-size="4.5" fill="#555">30%</text>
<line x1="74.2" y1="674.5" x2="756.8" y2="674.5" stroke="#858585" stroke-width="1"/>
<text x="74.6" y="676.4" text-anchor="end" font-size="4.5" fill="#555">25%</text>
<line x1="74.2" y1="690.5" x2="756.8" y2="690.5" stroke="#858585" stroke-width="1"/>
<text x="74.6" y="691.8" text-anchor="end" font-size="4.5" fill="#555">20%</text>
<line x1="74.2" y1="705.5" x2="756.8" y2="705.5" stroke="#858585" stroke-width="1"/>
<text x="74.6" y="707.3" text-anchor="end" font-size="4.5" fill="#555">15%</text>
<line x1="74.2" y1="721.5" x2="756.8" y2="721.5" stroke="#858585" stroke-width="1"/>
<text x="74.6" y="722.8" text-anchor="end" font-size="4.5" fill="#555">10%</text>
<line x1="74.2" y1="736.5" x2="756.8" y2="736.5" stroke="#858585" stroke-width="1"/>
<text x="74.6" y="738.3" text-anchor="end" font-size="4.5" fill="#555">5%</text>
<line x1="74.2" y1="752.5" x2="756.8" y2="752.5" stroke="#858585" stroke-width="1"/>
<text x="74.6" y="753.8" text-anchor="end" font-size="4.5" fill="#555">0%</text>
<line x1="76.5" y1="437.4" x2="76.5" y2="754.2" stroke="#858585" stroke-width="1"/>
<line x1="101.5" y1="437.4" x2="101.5" y2="754.2" stroke="#858585" stroke-width="1"/>
<text x="101.6" y="759.2" text-anchor="middle" font-size="4.5" fill="#555">22:39:30</text>
<line x1="145.5" y1="437.4" x2="145.5" y2="754.2" stroke="#858585" stroke-width="1"/>
<text x="145.9" y="759.2" text-anchor="middle" font-size="4.5" fill="#555">22:39:45</text>
<line x1="190.5" y1="437.4" x2="190.5" y2="754.2" stroke="#858585" stroke-width="1"/>
<text x="190.2" y="759.2" text-anchor="middle" font-size="4.5" fill="#555">22:40:00</text>
<line x1="234.5" y1="437.4" x2="234.5" y2="754.2" stroke="#858585" stroke-width="1"/>
<text x="234.5" y="759.2" text-anchor="middle" font-size="4.5" fill="#555">22:40:15</text>
<line x1="278.5" y1="437.4" x2="278.5" y2="754.2" stroke="#858585" stroke-width="1"/>
<text x="278.8" y="759.2" text-anchor="middle" font-size="4.5" fill="#555">22:40:30</text>
<line x1="323.5" y1="437.4" x2="323.5" y2="754.2" stroke="#858585" stroke-width="1"/>
<text x="323.0" y="759.2" text-anchor="middle" font-size="4.5" fill="#555">22:40:45</text>
<line x1="367.5" y1="437.4" x2="367.5" y2="754.2" stroke="#858585" stroke-width="1"/>
<text x="367.3" y="759.2" text-anchor="middle" font-size="4.5" fill="#555">22:41:00</text>
<line x1="411.5" y1="437.4" x2="411.5" y2="754.2" stroke="#858585" stroke-width="1"/>
<text x="411.6" y="759.2" text-anchor="middle" font-size="4.5" fill="#555">22:41:15</text>
<line x1="455.5" y1="437.4" x2="455.5" y2="754.2" stroke="#858585" stroke-width="1"/>
<text x="455.9" y="759.2" text-anchor="middle" font-size="4.5" fill="#555">22:41:30</text>
<line x1="500.5" y1="437.4" x2="500.5" y2="754.2" stroke="#858585" stroke-width="1"/>
<text x="500.2" y="759.2" text-anchor="middle" font-size="4.5" fill="#555">22:41:45</text>
<line x1="544.5" y1="437.4" x2="544.5" y2="754.2" stroke="#858585" stroke-width="1"/>
<text x="544.5" y="759.2" text-anchor="middle" font-size="4.5" fill="#555">22:42:00</text>
<line x1="588.5" y1="437.4" x2="588.5" y2="754.2" stroke="#858585" stroke-width="1"/>
<text x="588.8" y="759.2" text-anchor="middle" font-size="4.5" fill="#555">22:42:15</text>
<line x1="633.5" y1="437.4" x2="633.5" y2="754.2" stroke="#858585" stroke-width="1"/>
<text x="633.1" y="759.2" text-anchor="middle" font-size="4.5" fill="#555">22:42:30</text>
<line x1="677.5" y1="437.4" x2="677.5" y2="754.2" stroke="#858585" stroke-width="1"/>
<text x="677.4" y="759.2" text-anchor="middle" font-size="4.5" fill="#555">22:42:45</text>
<line x1="721.5" y1="437.4" x2="721.5" y2="754.2" stroke="#858585" stroke-width="1"/>
<text x="721.7" y="759.2" text-anchor="middle" font-size="4.5" fill="#555">22:43:00</text>
<line x1="76.2" y1="442.5" x2="756.8" y2="442.5" stroke="#b67c3c" stroke-width="1"/>
<rect x="603.4" y="442" width="4.8" height="1" fill="#c9c2bd"/>
<polyline points="603,442.6 605.4,469.5 608.6,442.6" fill="none" stroke="#f59b28" stroke-width="0.75"/>
<polyline clip-path="url(#cpuclip)" points="76.2,751.9 79.6,717.2 80.5,720.2 82.7,728.3 85.4,725.3 88.5,731.0 90.8,732.1 94.7,721.8 97.0,722.9 100.6,728.4 102.7,726.1 106.3,729.2 108.6,728.0 112.4,721.3 115.1,726.1 118.6,724.1 120.5,725.6 123.5,719.8 126.5,728.0 129.4,728.4 132.5,731.0 135.6,721.0 136.4,670.9 137.6,560.0 138.5,492.4 139.6,560.0 140.7,700.0 141.3,733.4 144.4,716.7 147.2,725.3 150.6,719.2 153.6,726.4 156.1,716.7 159.2,728.0 162.1,730.7 165.7,724.9 168.0,728.7 171.4,719.5 174.2,721.8 177.3,727.7 180.0,719.9 183.1,727.5 185.4,723.3 188.8,732.1 191.9,726.4 194.5,715.2 197.5,731.0 200.4,719.9 203.5,729.0 207.3,724.6 210.4,724.4 212.7,723.3 215.1,726.4 217.8,722.9 220.9,732.1 224.3,710.2 227.4,723.3 230.8,737.2 234.4,712.2 236.7,738.0 239.4,710.2 242.1,724.9 245.2,724.6 248.2,728.3 242.1,724.7 245.7,725.3 249.0,728.6 252.1,700.3 254.9,682.3 257.5,751.8 260.6,708.8 263.7,710.6 266.5,731.9 268.8,670.7 271.7,708.0 275.3,724.7 278.1,726.8 283.0,751.8 283.8,706.2 286.6,724.7 291.0,687.4 295.3,751.8 297.9,709.3 301.3,727.3 303.8,731.2 308.2,751.8 311.6,644.4 313.6,708.8 315.9,648.3 319.8,704.1 322.9,751.8 327.8,572.9 330.9,663.0 333.7,751.8 339.9,659.1 343.5,670.7 346.3,616.6 349.4,751.8 351.5,717.0 355.1,712.4 357.9,751.8 360.5,668.1 363.6,711.9 366.9,724.7 369.5,719.6 372.6,598.1 375.6,713.2 379.8,751.8 382.1,634.6 384.1,719.6 387.0,613.3 390.8,751.8 395.7,696.4 399.6,710.6 402.4,623.8 408.6,751.8 410.0,735.0 412.1,663.0 415.1,578.5 416.9,751.8 419.8,679.7 423.4,670.2 426.7,751.8 428.0,698.5 432.7,719.6 435.5,656.5 438.8,715.7 440.9,711.9 444.2,713.9 446.3,699.0 449.1,729.9 453.0,726.8 458.4,693.1 464.1,734.5 468.2,728.6 470.5,611.0 473.3,719.6 476.2,645.5 478.7,728.6 483.4,722.7 485.9,652.1 488.5,751.8 490.3,690.0 493.9,713.2 498.0,717.0 502.7,581.9 505.8,663.0 508.6,719.6 512.4,729.4 514.2,708.0 517.3,751.8 520.7,726.0 523.3,728.6 526.6,709.3 532.3,728.6 535.6,692.6 541.3,718.3 543.8,721.6 546.4,751.8 549.8,634.6 553.4,616.6 555.9,751.8 561.4,643.7 564.4,729.9 567.8,721.6 570.9,722.7 573.4,751.8 576.0,647.5 579.4,751.8 581.9,724.7 583.2,709.3 585.0,740.2 587.1,751.8 582.6,709.3 585.7,751.8 588.2,704.1 590.8,635.9 594.2,704.1 597.0,639.8 600.1,699.0 603.7,751.8 605.5,639.3 608.3,751.8 611.4,717.0 614.7,701.1 617.8,707.2 623.5,677.1 624.3,751.8 626.3,726.8 630.2,751.8 634.1,723.4 637.1,717.0 640.0,706.7 641.3,751.8 644.4,720.9 647.4,723.4 652.6,700.3 654.9,751.8 659.0,686.6 661.9,706.7 665.2,608.1 668.3,706.7 671.1,710.6 674.5,603.8 677.8,706.7 680.4,709.3 683.0,725.3 688.6,709.8 692.7,733.7 697.9,704.7 700.5,705.4 703.6,727.8 706.6,728.6 709.2,700.3 715.6,741.5 723.1,700.3 724.1,751.8 726.7,669.4 729.8,710.6 734.2,616.1 736.5,751.8 739.1,704.1 742.9,695.1 745.3,751.8 749.9,691.3 751.7,751.8 754.5,621.0 756.8,675.8" fill="none" stroke="#1a9fd8" stroke-width="0.8" stroke-linejoin="round"/>
<rect x="673.6" y="765.6" width="4.6" height="4.6" rx="0.8" fill="#f39a26"/><text x="680.4" y="770" font-size="5.4" fill="#222">CPU 使用情况</text>
<rect x="719.4" y="765.6" width="4.6" height="4.6" rx="0.8" fill="#1a9fd8"/><text x="726.4" y="770" font-size="5.4" fill="#222">垃圾回收活动</text>
<rect x="792.3" y="446.9" width="675.0" height="5.0" fill="#fffcff"/>
<rect x="792.3" y="451.9" width="675.0" height="300.3" fill="#f8cf9c"/>
<polygon clip-path="url(#heapclip)" points="792.3,752.2 792.3,542.0 793.6,563.1 796.4,559.1 799.3,562.3 805.3,549.6 808.0,556.4 811.2,529.3 814.2,532.0 816.6,493.4 819.6,554.5 822.3,495.5 825.5,545.5 831.5,472.6 833.6,478.8 837.2,478.8 840.1,527.4 843.4,506.4 846.1,495.0 849.1,469.1 852.0,505.0 853.1,563.1 855.3,661.8 858.0,579.9 860.7,606.4 863.4,586.1 866.9,649.6 869.6,651.2 872.8,628.0 875.0,623.1 878.2,592.8 880.9,615.8 884.2,559.9 890.4,626.6 893.1,572.6 896.1,626.6 898.5,572.6 901.8,607.7 904.7,600.9 907.4,578.8 910.7,622.6 913.1,571.2 915.8,589.3 919.1,557.2 922.0,598.2 925.0,557.7 930.9,602.3 933.6,607.7 936.6,577.4 940.1,596.4 942.8,594.2 946.1,607.7 948.8,582.0 952.6,543.6 956.1,573.9 955.0,567.2 960.4,603.6 966.4,592.3 969.9,593.4 972.6,527.4 976.1,552.8 981.5,553.6 984.2,590.1 986.9,571.2 990.1,570.7 995.5,592.8 998.2,596.9 1001.8,534.7 1006.4,555.0 1007.7,588.8 1011.2,532.0 1013.4,572.6 1015.5,576.6 1019.9,596.4 1023.1,598.2 1026.4,542.8 1028.2,584.7 1031.2,548.8 1034.2,595.5 1037.7,524.7 1041.5,534.7 1042.3,592.8 1046.9,595.0 1048.8,534.7 1051.5,545.5 1054.2,580.7 1060.4,596.9 1063.6,553.1 1065.8,592.8 1069.3,584.7 1072.6,524.5 1074.7,587.4 1078.0,592.3 1081.2,582.0 1084.7,593.4 1088.8,591.5 1094.2,521.2 1101.8,591.5 1104.5,526.6 1107.2,542.8 1110.1,546.9 1116.6,587.4 1119.3,588.8 1122.0,516.6 1125.8,518.5 1128.8,578.0 1126.4,519.9 1128.8,578.0 1130.4,542.8 1133.1,565.8 1137.4,581.2 1139.9,578.0 1141.8,515.8 1146.6,529.3 1149.3,591.5 1152.3,518.5 1154.2,530.7 1158.0,519.9 1162.8,581.5 1166.1,571.2 1168.8,569.9 1172.0,573.9 1175.0,568.5 1177.7,518.5 1182.3,510.4 1184.2,579.9 1187.2,567.2 1189.1,576.6 1191.8,523.9 1196.4,508.5 1199.6,580.7 1201.5,521.8 1203.4,549.6 1206.9,505.8 1210.9,511.8 1214.2,573.9 1215.8,528.0 1221.8,584.7 1225.5,506.4 1226.9,576.1 1229.9,563.9 1233.6,580.1 1236.4,566.4 1239.9,561.8 1243.1,549.6 1245.8,544.2 1250.7,582.8 1254.2,576.1 1257.4,573.4 1259.3,526.6 1262.3,517.2 1265.5,575.3 1268.5,513.9 1271.8,569.9 1275.0,573.9 1277.7,571.8 1280.4,582.0 1284.5,571.2 1286.1,536.1 1289.1,567.2 1292.0,503.6 1295.8,578.0 1295.0,579.3 1297.7,522.6 1300.4,546.9 1303.1,526.6 1306.4,559.1 1309.3,569.9 1311.8,561.8 1315.3,515.0 1318.0,578.0 1320.7,509.1 1324.7,519.9 1329.6,568.5 1335.0,563.1 1336.1,536.1 1338.2,561.8 1341.8,506.9 1346.4,504.5 1347.7,552.3 1351.8,560.4 1353.4,519.1 1356.6,546.9 1359.9,519.9 1363.6,568.0 1366.1,515.0 1369.1,497.7 1371.5,552.3 1374.2,524.7 1377.4,524.5 1380.7,519.1 1386.9,562.6 1389.6,561.8 1394.5,526.6 1396.9,519.9 1399.9,540.1 1403.9,536.1 1406.6,557.7 1409.1,559.9 1412.0,550.9 1418.0,485.5 1421.2,562.6 1424.2,557.7 1426.9,505.5 1434.2,544.2 1435.5,515.8 1441.8,525.3 1445.8,563.1 1447.7,512.3 1450.9,513.9 1453.9,544.2 1456.4,488.8 1460.7,556.4 1462.6,515.8 1465.8,550.9 1467.4,555.0 1467.3,555.0 1467.3,752.2" fill="#98dff8"/>
<polyline clip-path="url(#heapclip)" points="792.3,542.0 793.6,563.1 796.4,559.1 799.3,562.3 805.3,549.6 808.0,556.4 811.2,529.3 814.2,532.0 816.6,493.4 819.6,554.5 822.3,495.5 825.5,545.5 831.5,472.6 833.6,478.8 837.2,478.8 840.1,527.4 843.4,506.4 846.1,495.0 849.1,469.1 852.0,505.0 853.1,563.1 855.3,661.8 858.0,579.9 860.7,606.4 863.4,586.1 866.9,649.6 869.6,651.2 872.8,628.0 875.0,623.1 878.2,592.8 880.9,615.8 884.2,559.9 890.4,626.6 893.1,572.6 896.1,626.6 898.5,572.6 901.8,607.7 904.7,600.9 907.4,578.8 910.7,622.6 913.1,571.2 915.8,589.3 919.1,557.2 922.0,598.2 925.0,557.7 930.9,602.3 933.6,607.7 936.6,577.4 940.1,596.4 942.8,594.2 946.1,607.7 948.8,582.0 952.6,543.6 956.1,573.9 955.0,567.2 960.4,603.6 966.4,592.3 969.9,593.4 972.6,527.4 976.1,552.8 981.5,553.6 984.2,590.1 986.9,571.2 990.1,570.7 995.5,592.8 998.2,596.9 1001.8,534.7 1006.4,555.0 1007.7,588.8 1011.2,532.0 1013.4,572.6 1015.5,576.6 1019.9,596.4 1023.1,598.2 1026.4,542.8 1028.2,584.7 1031.2,548.8 1034.2,595.5 1037.7,524.7 1041.5,534.7 1042.3,592.8 1046.9,595.0 1048.8,534.7 1051.5,545.5 1054.2,580.7 1060.4,596.9 1063.6,553.1 1065.8,592.8 1069.3,584.7 1072.6,524.5 1074.7,587.4 1078.0,592.3 1081.2,582.0 1084.7,593.4 1088.8,591.5 1094.2,521.2 1101.8,591.5 1104.5,526.6 1107.2,542.8 1110.1,546.9 1116.6,587.4 1119.3,588.8 1122.0,516.6 1125.8,518.5 1128.8,578.0 1126.4,519.9 1128.8,578.0 1130.4,542.8 1133.1,565.8 1137.4,581.2 1139.9,578.0 1141.8,515.8 1146.6,529.3 1149.3,591.5 1152.3,518.5 1154.2,530.7 1158.0,519.9 1162.8,581.5 1166.1,571.2 1168.8,569.9 1172.0,573.9 1175.0,568.5 1177.7,518.5 1182.3,510.4 1184.2,579.9 1187.2,567.2 1189.1,576.6 1191.8,523.9 1196.4,508.5 1199.6,580.7 1201.5,521.8 1203.4,549.6 1206.9,505.8 1210.9,511.8 1214.2,573.9 1215.8,528.0 1221.8,584.7 1225.5,506.4 1226.9,576.1 1229.9,563.9 1233.6,580.1 1236.4,566.4 1239.9,561.8 1243.1,549.6 1245.8,544.2 1250.7,582.8 1254.2,576.1 1257.4,573.4 1259.3,526.6 1262.3,517.2 1265.5,575.3 1268.5,513.9 1271.8,569.9 1275.0,573.9 1277.7,571.8 1280.4,582.0 1284.5,571.2 1286.1,536.1 1289.1,567.2 1292.0,503.6 1295.8,578.0 1295.0,579.3 1297.7,522.6 1300.4,546.9 1303.1,526.6 1306.4,559.1 1309.3,569.9 1311.8,561.8 1315.3,515.0 1318.0,578.0 1320.7,509.1 1324.7,519.9 1329.6,568.5 1335.0,563.1 1336.1,536.1 1338.2,561.8 1341.8,506.9 1346.4,504.5 1347.7,552.3 1351.8,560.4 1353.4,519.1 1356.6,546.9 1359.9,519.9 1363.6,568.0 1366.1,515.0 1369.1,497.7 1371.5,552.3 1374.2,524.7 1377.4,524.5 1380.7,519.1 1386.9,562.6 1389.6,561.8 1394.5,526.6 1396.9,519.9 1399.9,540.1 1403.9,536.1 1406.6,557.7 1409.1,559.9 1412.0,550.9 1418.0,485.5 1421.2,562.6 1424.2,557.7 1426.9,505.5 1434.2,544.2 1435.5,515.8 1441.8,525.3 1445.8,563.1 1447.7,512.3 1450.9,513.9 1453.9,544.2 1456.4,488.8 1460.7,556.4 1462.6,515.8 1465.8,550.9 1467.4,555.0" fill="none" stroke="#1a9fd8" stroke-width="0.9" stroke-linejoin="round"/>
<line x1="792.3" y1="451.9" x2="1467.3" y2="451.9" stroke="#f5a64e" stroke-width="1.1"/>
<line x1="790.3" y1="751.5" x2="1467.3" y2="751.5" stroke="#303030" stroke-opacity="0.5" stroke-width="1"/>
<text x="790" y="753.0" text-anchor="end" font-size="4.4" fill="#555">0 MB</text>
<line x1="790.3" y1="720.5" x2="1467.3" y2="720.5" stroke="#303030" stroke-opacity="0.5" stroke-width="1"/>
<text x="790" y="722.0" text-anchor="end" font-size="4.4" fill="#555">25 MB</text>
<line x1="790.3" y1="689.5" x2="1467.3" y2="689.5" stroke="#303030" stroke-opacity="0.5" stroke-width="1"/>
<text x="790" y="691.0" text-anchor="end" font-size="4.4" fill="#555">50 MB</text>
<line x1="790.3" y1="658.5" x2="1467.3" y2="658.5" stroke="#303030" stroke-opacity="0.5" stroke-width="1"/>
<text x="790" y="660.0" text-anchor="end" font-size="4.4" fill="#555">75 MB</text>
<line x1="790.3" y1="627.5" x2="1467.3" y2="627.5" stroke="#303030" stroke-opacity="0.5" stroke-width="1"/>
<text x="790" y="629.0" text-anchor="end" font-size="4.4" fill="#555">100 MB</text>
<line x1="790.3" y1="596.5" x2="1467.3" y2="596.5" stroke="#303030" stroke-opacity="0.5" stroke-width="1"/>
<text x="790" y="597.9" text-anchor="end" font-size="4.4" fill="#555">125 MB</text>
<line x1="790.3" y1="565.5" x2="1467.3" y2="565.5" stroke="#303030" stroke-opacity="0.5" stroke-width="1"/>
<text x="790" y="566.9" text-anchor="end" font-size="4.4" fill="#555">150 MB</text>
<line x1="790.3" y1="534.5" x2="1467.3" y2="534.5" stroke="#303030" stroke-opacity="0.5" stroke-width="1"/>
<text x="790" y="535.9" text-anchor="end" font-size="4.4" fill="#555">175 MB</text>
<line x1="790.3" y1="503.5" x2="1467.3" y2="503.5" stroke="#303030" stroke-opacity="0.5" stroke-width="1"/>
<text x="790" y="504.9" text-anchor="end" font-size="4.4" fill="#555">200 MB</text>
<line x1="790.3" y1="472.5" x2="1467.3" y2="472.5" stroke="#303030" stroke-opacity="0.5" stroke-width="1"/>
<text x="790" y="473.9" text-anchor="end" font-size="4.4" fill="#555">225 MB</text>
<line x1="792.5" y1="446.9" x2="792.5" y2="754.2" stroke="#303030" stroke-opacity="0.5" stroke-width="1"/>
<line x1="818.5" y1="446.9" x2="818.5" y2="754.2" stroke="#303030" stroke-opacity="0.5" stroke-width="1"/>
<text x="818.5" y="759.2" text-anchor="middle" font-size="4.5" fill="#555">22:39:30</text>
<line x1="862.5" y1="446.9" x2="862.5" y2="754.2" stroke="#303030" stroke-opacity="0.5" stroke-width="1"/>
<text x="862.4" y="759.2" text-anchor="middle" font-size="4.5" fill="#555">22:39:45</text>
<line x1="906.5" y1="446.9" x2="906.5" y2="754.2" stroke="#303030" stroke-opacity="0.5" stroke-width="1"/>
<text x="906.2" y="759.2" text-anchor="middle" font-size="4.5" fill="#555">22:40:00</text>
<line x1="950.5" y1="446.9" x2="950.5" y2="754.2" stroke="#303030" stroke-opacity="0.5" stroke-width="1"/>
<text x="950.0" y="759.2" text-anchor="middle" font-size="4.5" fill="#555">22:40:15</text>
<line x1="993.5" y1="446.9" x2="993.5" y2="754.2" stroke="#303030" stroke-opacity="0.5" stroke-width="1"/>
<text x="993.9" y="759.2" text-anchor="middle" font-size="4.5" fill="#555">22:40:30</text>
<line x1="1037.5" y1="446.9" x2="1037.5" y2="754.2" stroke="#303030" stroke-opacity="0.5" stroke-width="1"/>
<text x="1037.8" y="759.2" text-anchor="middle" font-size="4.5" fill="#555">22:40:45</text>
<line x1="1081.5" y1="446.9" x2="1081.5" y2="754.2" stroke="#303030" stroke-opacity="0.5" stroke-width="1"/>
<text x="1081.6" y="759.2" text-anchor="middle" font-size="4.5" fill="#555">22:41:00</text>
<line x1="1125.5" y1="446.9" x2="1125.5" y2="754.2" stroke="#303030" stroke-opacity="0.5" stroke-width="1"/>
<text x="1125.5" y="759.2" text-anchor="middle" font-size="4.5" fill="#555">22:41:15</text>
<line x1="1169.5" y1="446.9" x2="1169.5" y2="754.2" stroke="#303030" stroke-opacity="0.5" stroke-width="1"/>
<text x="1169.3" y="759.2" text-anchor="middle" font-size="4.5" fill="#555">22:41:30</text>
<line x1="1213.5" y1="446.9" x2="1213.5" y2="754.2" stroke="#303030" stroke-opacity="0.5" stroke-width="1"/>
<text x="1213.2" y="759.2" text-anchor="middle" font-size="4.5" fill="#555">22:41:45</text>
<line x1="1257.5" y1="446.9" x2="1257.5" y2="754.2" stroke="#303030" stroke-opacity="0.5" stroke-width="1"/>
<text x="1257.0" y="759.2" text-anchor="middle" font-size="4.5" fill="#555">22:42:00</text>
<line x1="1300.5" y1="446.9" x2="1300.5" y2="754.2" stroke="#303030" stroke-opacity="0.5" stroke-width="1"/>
<text x="1300.8" y="759.2" text-anchor="middle" font-size="4.5" fill="#555">22:42:15</text>
<line x1="1344.5" y1="446.9" x2="1344.5" y2="754.2" stroke="#303030" stroke-opacity="0.5" stroke-width="1"/>
<text x="1344.7" y="759.2" text-anchor="middle" font-size="4.5" fill="#555">22:42:30</text>
<line x1="1388.5" y1="446.9" x2="1388.5" y2="754.2" stroke="#303030" stroke-opacity="0.5" stroke-width="1"/>
<text x="1388.6" y="759.2" text-anchor="middle" font-size="4.5" fill="#555">22:42:45</text>
<line x1="1432.5" y1="446.9" x2="1432.5" y2="754.2" stroke="#303030" stroke-opacity="0.5" stroke-width="1"/>
<text x="1432.4" y="759.2" text-anchor="middle" font-size="4.5" fill="#555">22:43:00</text>
<line x1="998.3" y1="447" x2="998.3" y2="752.2" stroke="#111" stroke-width="0.95" stroke-dasharray="1 1"/><circle cx="998.4" cy="452.2" r="1" fill="#3b4a78"/>
<rect x="1005.5" y="452.4" width="68.8" height="25.4" fill="#4a4a4a" stroke="#6e6e6e" stroke-width="0.5"/>
<text x="1008" y="459.6" font-size="4.7" fill="#fff">22:40:31</text>
<text x="1008" y="466.8" font-size="4.5" fill="#fff">堆 大小</text><text x="1072" y="466.8" text-anchor="end" font-size="4.5" fill="#fff">253,493,248 个字节</text>
<text x="1008" y="474" font-size="4.5" fill="#fff">使用的 堆</text><text x="1072" y="474" text-anchor="end" font-size="4.5" fill="#fff">157,693,368 个字节</text>
<rect x="1409.6" y="765.6" width="4.6" height="4.6" rx="0.8" fill="#f39a26"/><text x="1416.6" y="770" font-size="5.4" fill="#222">堆 大小</text>
<rect x="1439.8" y="765.6" width="4.6" height="4.6" rx="0.8" fill="#1a9fd8"/><text x="1446.6" y="770" font-size="5.4" fill="#222">使用的 堆</text>
</g>
</svg>
</body></html>
